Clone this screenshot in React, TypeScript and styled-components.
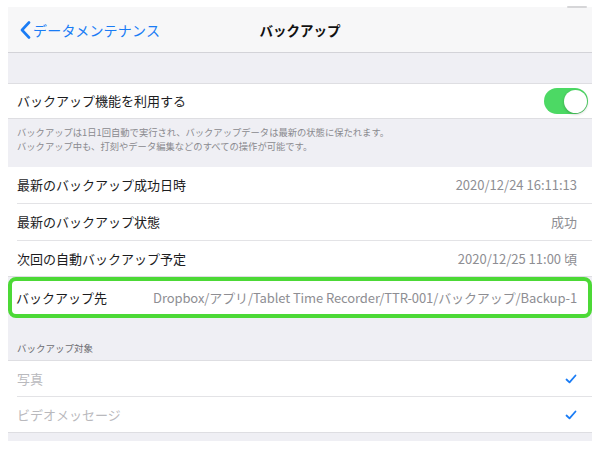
import styled, { createGlobalStyle } from "styled-components";

const GlobalStyle = createGlobalStyle`
    body {
        margin: 0;
        background: #ffffff;
        font-family: "Noto Sans CJK JP", "Noto Sans", sans-serif;
        color: #1c1c1e;
    }
`;

const rows = [
    { label: "最新のバックアップ成功日時", value: "2020/12/24 16:11:13" },
    { label: "最新のバックアップ状態", value: "成功" },
    { label: "次回の自動バックアップ予定", value: "2020/12/25 11:00 頃" },
];

const targets = ["写真", "ビデオメッセージ"];

const App = () => {
    return (
        <>
            <GlobalStyle />
            <Screen>
                <NavBar>
                    <BackButton>
                        <svg width="11" height="18" viewBox="0 0 11 18">
                            <path
                                d="M9 1.5 L2 9 L9 16.5"
                                fill="none"
                                stroke="#1a7cf5"
                                strokeWidth="2.6"
                                strokeLinecap="round"
                                strokeLinejoin="round"
                            />
                        </svg>
                        <span>データメンテナンス</span>
                    </BackButton>
                    <NavTitle>バックアップ</NavTitle>
                    <div />
                    <Grabber />
                </NavBar>

                <SectionGap $height={30} />

                <Group>
                    <Row $height={34} $last>
                        <Label>バックアップ機能を利用する</Label>
                        <Toggle>
                            <Knob />
                        </Toggle>
                    </Row>
                </Group>
                <Note>
                    バックアップは1日1回自動で実行され、バックアップデータは最新の状態に保たれます。
                    <br />
                    バックアップ中も、打刻やデータ編集などのすべての操作が可能です。
                </Note>

                <Group $noTop>
                    {rows.map((row, i) => (
                        <Row key={row.label} $height={i === 2 ? 35 : 36} $last={i === 2}>
                            <Label>{row.label}</Label>
                            <Value>{row.value}</Value>
                        </Row>
                    ))}
                </Group>

                <Highlight>
                    <Label>バックアップ先</Label>
                    <Value $tight>Dropbox/アプリ/Tablet Time Recorder/TTR-001/バックアップ/Backup-1</Value>
                </Highlight>

                <SectionHeader>バックアップ対象</SectionHeader>

                <Group>
                    {targets.map((t, i) => (
                        <Row key={t} $height={35} $last={i === targets.length - 1}>
                            <Label $disabled>{t}</Label>
                            <svg width="12" height="10" viewBox="0 0 12 10">
                                <path
                                    d="M1.5 5.5 L4.5 8.3 L10.5 1.5"
                                    fill="none"
                                    stroke="#1a7cf5"
                                    strokeWidth="1.8"
                                    strokeLinecap="round"
                                    strokeLinejoin="round"
                                />
                            </svg>
                        </Row>
                    ))}
                </Group>
                <SectionGap $height={8} />
            </Screen>
        </>
    );
};

const Screen = styled.div`
    margin: 7px 8px 0;
    width: 584px;
    background: #efeff4;
    display: flex;
    flex-direction: column;
`;

const NavBar = styled.header`
    position: relative;
    height: 45px;
    background: #f7f7f8;
    border-bottom: 1px solid #d3d3d8;
    display: grid;
    grid-template-columns: 1fr auto 1fr;
    align-items: center;
    padding: 0 12px;
`;

const BackButton = styled.div`
    display: flex;
    align-items: center;
    gap: 2px;
    color: #1a7cf5;
    font-size: 14px;
    letter-spacing: 0.2px;
    white-space: nowrap;
`;

const NavTitle = styled.div`
    font-size: 13.5px;
    font-weight: 700;
    color: #111;
`;

const Grabber = styled.div`
    position: absolute;
    top: -1px;
    right: 5px;
    width: 20px;
    height: 2px;
    border-radius: 1px;
    background: #d6d6d8;
`;

const SectionGap = styled.div<{ $height: number }>`
    height: ${(p) => p.$height}px;
`;

const Group = styled.section<{ $noTop?: boolean }>`
    background: #ffffff;
    border-top: ${(p) => (p.$noTop ? "none" : "1px solid #dedee2")};
    border-bottom: 1px solid #dedee2;
`;

const Row = styled.div<{ $height: number; $last?: boolean }>`
    height: ${(p) => p.$height}px;
    margin-left: 9px;
    padding-right: 15px;
    display: flex;
    align-items: center;
    justify-content: space-between;
    border-bottom: ${(p) => (p.$last ? "none" : "1px solid #e3e3e6")};
`;

const Label = styled.span<{ $disabled?: boolean }>`
    font-size: 13px;
    line-height: 16px;
    white-space: nowrap;
    color: ${(p) => (p.$disabled ? "#b9b9bd" : "#1c1c1e")};
`;

const Value = styled.span<{ $tight?: boolean }>`
    font-size: 13px;
    line-height: 16px;
    letter-spacing: ${(p) => (p.$tight ? "-0.1px" : "0")};
    white-space: nowrap;
    color: #8e8e93;
`;

const Toggle = styled.div`
    width: 44px;
    height: 26px;
    margin-right: -11px;
    border-radius: 13px;
    background: #4cd964;
    display: flex;
    align-items: center;
    justify-content: flex-end;
    padding: 0 1.5px;
    box-sizing: border-box;
`;

const Knob = styled.div`
    width: 23px;
    height: 23px;
    border-radius: 50%;
    background: #ffffff;
    box-shadow: 0 1px 3px rgba(0, 0, 0, 0.25);
`;

const Note = styled.p`
    margin: 0;
    height: 48px;
    box-sizing: border-box;
    padding: 6px 9px 0;
    font-size: 9.3px;
    line-height: 14px;
    color: #8a8a8f;
    white-space: nowrap;
`;

const Highlight = styled.div`
    height: 41px;
    box-sizing: border-box;
    background: #ffffff;
    border: 4.5px solid #4cd936;
    border-radius: 8px;
    padding: 0 11px 0 4px;
    display: flex;
    align-items: center;
    justify-content: space-between;
`;

const SectionHeader = styled.div`
    height: 42px;
    box-sizing: border-box;
    padding: 0 9px 5px;
    display: flex;
    align-items: flex-end;
    font-size: 9.5px;
    color: #6d6d72;
`;

export default App;
